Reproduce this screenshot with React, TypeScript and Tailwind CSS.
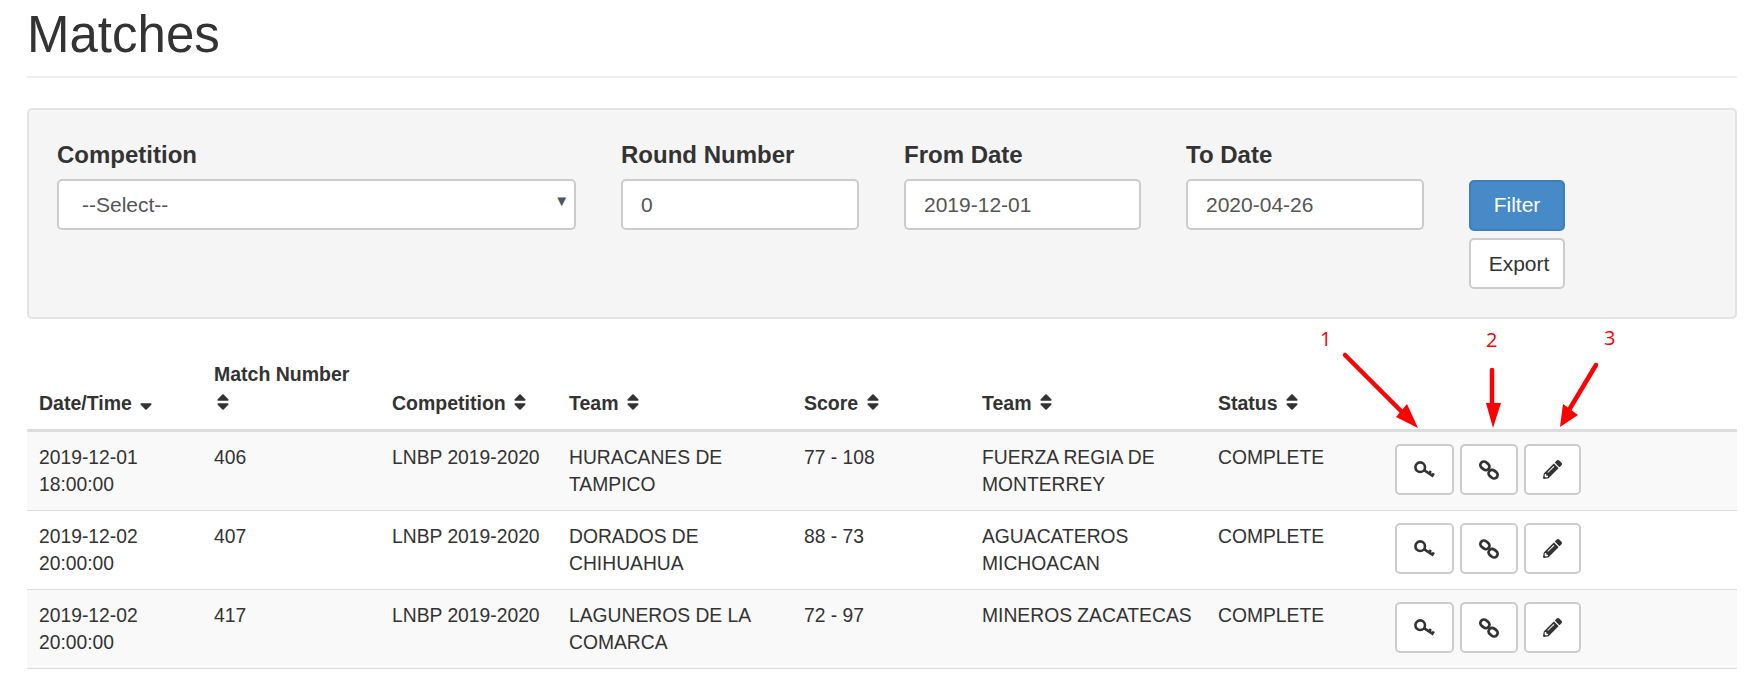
import { FaSort, FaSortDown, FaPencilAlt } from "react-icons/fa";

const rows = [
  {
    date: "2019-12-01",
    time: "18:00:00",
    num: "406",
    comp: "LNBP 2019-2020",
    home: "HURACANES DE TAMPICO",
    score: "77 - 108",
    away: "FUERZA REGIA DE MONTERREY",
  },
  {
    date: "2019-12-02",
    time: "20:00:00",
    num: "407",
    comp: "LNBP 2019-2020",
    home: "DORADOS DE CHIHUAHUA",
    score: "88 - 73",
    away: "AGUACATEROS MICHOACAN",
  },
  {
    date: "2019-12-02",
    time: "20:00:00",
    num: "417",
    comp: "LNBP 2019-2020",
    home: "LAGUNEROS DE LA COMARCA",
    score: "72 - 97",
    away: "MINEROS ZACATECAS",
  },
];

function KeyIcon() {
  return (
    <svg width="21" height="18" viewBox="0 0 21 18" fill="none" stroke="#333" strokeWidth="2.6">
      <circle cx="6.2" cy="6.2" r="4.8" />
      <path d="M10 9.2 L19.5 15.4 M15.2 12.5 L16.8 10 M18.4 14.6 L19.8 12.4" />
    </svg>
  );
}

function LinkIcon() {
  return (
    <svg width="20" height="20" viewBox="0 0 21 21" fill="none" stroke="#333" strokeWidth="2.9">
      <rect x="1.2" y="2.4" width="10" height="7.4" rx="3.7" transform="rotate(38 6.2 6.1)" />
      <rect x="9.8" y="11.2" width="10" height="7.4" rx="3.7" transform="rotate(38 14.8 14.9)" />
    </svg>
  );
}

function SortHead({ label, sort }: { label: string; sort?: "down" }) {
  return (
    <>
      <span className="whitespace-nowrap">{label}</span>{" "}
      {sort === "down" ? (
        <FaSortDown className="inline -ml-px text-[20px] text-[#333] align-[-2px]" />
      ) : (
        <FaSort className="inline -ml-px text-[20px] text-[#333] align-[-2px]" />
      )}
    </>
  );
}

function Annotations() {
  return (
    <>
      <svg className="absolute left-0 top-0 pointer-events-none" width="1755" height="675" fill="none">
        <path d="M1345 355 L1408 418" stroke="#ff0000" strokeWidth="4.5" strokeLinecap="round" />
        <path d="M1418 428 L1396 417 L1407 404 Z" fill="#ff0000" />
        <path d="M1492 370 L1492 408" stroke="#ff0000" strokeWidth="4.5" strokeLinecap="round" />
        <path d="M1493 428 L1486 403 L1501 403 Z" fill="#ff0000" />
        <path d="M1596 365 L1569 410" stroke="#ff0000" strokeWidth="4.5" strokeLinecap="round" />
        <path d="M1560 427 L1563 404 L1578 415 Z" fill="#ff0000" />
      </svg>
      <span className="absolute left-[1320px] top-[326px] text-[20px] leading-[26px] text-[#ff0000] font-['Open_Sans',sans-serif]">1</span>
      <span className="absolute left-[1486px] top-[327px] text-[20px] leading-[26px] text-[#ff0000] font-['Open_Sans',sans-serif]">2</span>
      <span className="absolute left-[1604px] top-[325px] text-[20px] leading-[26px] text-[#ff0000] font-['Open_Sans',sans-serif]">3</span>
    </>
  );
}

export default function App() {
  return (
    <div className="relative w-[1755px] h-[675px] overflow-hidden bg-white text-[#333] font-['Liberation_Sans',Arial,sans-serif] text-[19.3px] leading-[27px]">
      <div className="ml-[27px] w-[1710px]">
        {/* Page header */}
        <div className="h-[78px] border-b-2 border-[#eeeeee]">
          <h1 className="text-[51px] leading-[70px] font-normal">Matches</h1>
        </div>

        {/* Filter well */}
        <div className="mt-[30px] h-[211px] rounded-[5px] border-2 border-[#e3e3e3] bg-[#f5f5f5] pl-[28px] pt-[30px]">
          <div className="flex text-[21px]">
            <div className="w-[519px] mr-[45px]">
              <label className="block text-[24px] font-bold leading-[30px] mb-[9px]">Competition</label>
              <div className="relative">
                <div className="h-[51px] rounded-[5px] border-2 border-[#cccccc] bg-white pl-[23px] leading-[47px] text-[#555]">--Select--</div>
                <span className="absolute right-[7px] top-[12px] text-[15px] leading-[20px] text-[#555]">▼</span>
              </div>
            </div>
            <div className="w-[238px] mr-[45px]">
              <label className="block text-[24px] font-bold leading-[30px] mb-[9px]">Round Number</label>
              <input readOnly value="0" className="block w-full h-[51px] rounded-[5px] border-2 border-[#cccccc] bg-white pl-[18px] text-[#555] outline-none" />
            </div>
            <div className="w-[237px] mr-[45px]">
              <label className="block text-[24px] font-bold leading-[30px] mb-[9px]">From Date</label>
              <input readOnly value="2019-12-01" className="block w-full h-[51px] rounded-[5px] border-2 border-[#cccccc] bg-white pl-[18px] text-[#555] outline-none" />
            </div>
            <div className="w-[238px] mr-[45px]">
              <label className="block text-[24px] font-bold leading-[30px] mb-[9px]">To Date</label>
              <input readOnly value="2020-04-26" className="block w-full h-[51px] rounded-[5px] border-2 border-[#cccccc] bg-white pl-[18px] text-[#555] outline-none" />
            </div>
            <div className="w-[96px] pt-[40px] flex flex-col gap-[7px]">
              <button className="h-[51px] rounded-[5px] border-2 border-[#3f7fb9] bg-[#468ac8] text-white pb-[2px]">Filter</button>
              <button className="h-[51px] rounded-[5px] border-2 border-[#cccccc] bg-white text-[#333] pl-[4px]">Export</button>
            </div>
          </div>
        </div>

        {/* Matches table */}
        <table className="mt-[41px] w-[1710px] table-fixed border-collapse">
          <thead>
            <tr className="border-b-[3px] border-[#dddddd] text-left align-bottom font-bold text-[19.5px] leading-[29px]">
              <th className="w-[175px] pl-3 pb-[11px]"><SortHead label="Date/Time" sort="down" /></th>
              <th className="w-[178px] pl-3 pr-5 pb-[11px]"><SortHead label="Match Number" /></th>
              <th className="w-[177px] pl-3 pb-[11px]"><SortHead label="Competition" /></th>
              <th className="w-[235px] pl-3 pb-[11px]"><SortHead label="Team" /></th>
              <th className="w-[178px] pl-3 pb-[11px]"><SortHead label="Score" /></th>
              <th className="w-[236px] pl-3 pb-[11px]"><SortHead label="Team" /></th>
              <th className="w-[178px] pl-3 pb-[11px]"><SortHead label="Status" /></th>
              <th className="pl-3 pb-[11px]"></th>
            </tr>
          </thead>
          <tbody>
            {rows.map((r, i) => (
              <tr key={i} className={`border-b-[1.5px] border-[#dddddd] align-top h-[79px] ${i % 2 === 0 ? "bg-[#f9f9f9]" : "bg-white"}`}>
                <td className="pl-3 pt-[12px] pb-[12px]">{r.date}<br />{r.time}</td>
                <td className="pl-3 pt-[12px]">{r.num}</td>
                <td className="pl-3 pt-[12px]">{r.comp}</td>
                <td className="pl-3 pr-4 pt-[12px]">{r.home}</td>
                <td className="pl-3 pt-[12px]">{r.score}</td>
                <td className="pl-3 pr-2 pt-[12px]">{r.away}</td>
                <td className="pl-3 pt-[12px]">COMPLETE</td>
                <td className="pl-[11px] pt-[12px]">
                  <div className="flex gap-[6px]">
                    <button className="w-[59px] h-[51px] rounded-[5px] border-2 border-[#cccccc] bg-white flex items-center justify-center"><KeyIcon /></button>
                    <button className="w-[58px] h-[51px] rounded-[5px] border-2 border-[#cccccc] bg-white flex items-center justify-center"><LinkIcon /></button>
                    <button className="w-[57px] h-[51px] rounded-[5px] border-2 border-[#cccccc] bg-white flex items-center justify-center"><FaPencilAlt className="text-[19px] text-[#333]" /></button>
                  </div>
                </td>
              </tr>
            ))}
          </tbody>
        </table>
      </div>
      <Annotations />
    </div>
  );
}
